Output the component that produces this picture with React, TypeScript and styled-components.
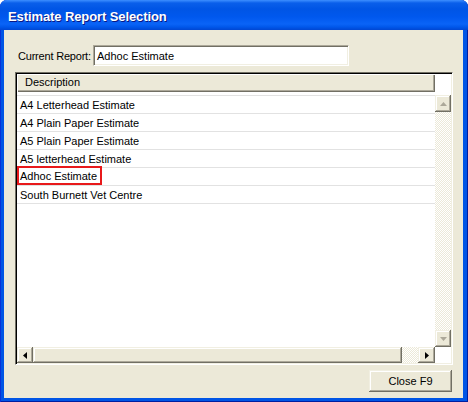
import React from 'react';
import styled, { createGlobalStyle } from 'styled-components';

const GlobalStyle = createGlobalStyle`
  html, body {
    margin: 0;
    padding: 0;
    background: #ffffff;
  }
  body {
    font-family: "Liberation Sans", Arial, sans-serif;
    font-size: 11px;
    color: #000;
  }
`;

const raised = `
  box-shadow:
    inset -1px -1px 0 #716f64,
    inset 1px 1px 0 #f1efe2,
    inset -2px -2px 0 #aca899,
    inset 2px 2px 0 #ffffff;
`;

const Window = styled.div`
  width: 468px;
  height: 402px;
  display: flex;
  flex-direction: column;
  background: #0055e5;
  border-radius: 7px 7px 0 0;
  overflow: hidden;
  box-shadow: inset 1px 0 0 #0831d9, inset -1px 0 0 #001ea0, inset 0 -1px 0 #001ea0;
`;

const TitleBar = styled.div`
  height: 30px;
  flex-shrink: 0;
  box-sizing: border-box;
  display: flex;
  align-items: center;
  padding: 2px 0 0 8px;
  background: linear-gradient(
    to bottom,
    #3d8fff 0,
    #0a5fea 3px,
    #0055e5 9px,
    #0058ee 17px,
    #0a64f7 24px,
    #0057ea 27px,
    #0046d2 30px
  );
  color: #ffffff;
  font-family: "Liberation Sans", Arial, sans-serif;
  font-weight: bold;
  font-size: 13px;
  letter-spacing: -0.1px;
  text-shadow: 1px 1px 0 #0a1883;
`;

const Body = styled.div`
  flex: 1;
  min-height: 0;
  margin: 0 5px 4px 4px;
  background: #ece9d8;
  display: flex;
  flex-direction: column;
  box-sizing: border-box;
  padding: 15px 10px 6px 11px;
`;

const ReportRow = styled.div`
  display: flex;
  align-items: center;
  height: 21px;
  padding-left: 3px;
`;

const Label = styled.span`
  width: 75px;
  flex-shrink: 0;
  white-space: nowrap;
  letter-spacing: -0.2px;
`;

const TextBox = styled.div`
  width: 256px;
  height: 21px;
  flex-shrink: 0;
  box-sizing: border-box;
  background: #ffffff;
  border-style: solid;
  border-width: 1px;
  border-color: #aca899 #ffffff #ffffff #aca899;
  box-shadow: inset 1px 1px 0 #716f64, inset -1px -1px 0 #f1efe2;
  padding-left: 3px;
  display: flex;
  align-items: center;
`;

const ListBox = styled.div`
  margin-top: 6px;
  height: 293px;
  box-sizing: border-box;
  border-style: solid;
  border-width: 1px;
  border-color: #716f64 #ffffff #ffffff #716f64;
  padding: 1px;
  box-shadow: inset 1px 1px 0 #000000, inset -1px -1px 0 #f1efe2;
  background: #ffffff;
`;

const ListGrid = styled.div`
  height: 100%;
  display: grid;
  grid-template-columns: 1fr 16px;
  grid-template-rows: 18px 3px 1fr 16px;
  background: #ffffff;
`;

const Header = styled.div`
  grid-column: 1;
  grid-row: 1;
  background: #ece9d8;
  padding-left: 8px;
  line-height: 16px;
  box-shadow: inset 1px 1px 0 #ffffff, inset -1px -1px 0 #716f64, inset -2px -2px 0 #aca899;
`;

const Rows = styled.div`
  grid-column: 1;
  grid-row: 3;
  overflow: hidden;
`;

const Row = styled.div<{ $last?: boolean }>`
  height: ${(p) => (p.$last ? 19 : 18)}px;
  box-sizing: border-box;
  border-top: 1px solid #e2e2e2;
  border-bottom: ${(p) => (p.$last ? '1px solid #e2e2e2' : 'none')};
  padding-left: 3px;
  display: flex;
  align-items: center;
  white-space: nowrap;
`;

const Highlight = styled.span`
  display: inline-flex;
  align-items: center;
  box-sizing: border-box;
  height: 19px;
  margin: -2px 0 0 -3px;
  padding: 0 3px 0 1px;
  border: 2px solid #e8191b;
`;

const VScroll = styled.div`
  grid-column: 2;
  grid-row: 3;
  display: flex;
  flex-direction: column;
`;

const HScroll = styled.div`
  grid-column: 1;
  grid-row: 4;
  display: flex;
`;

const ScrollButton = styled.div<{ $w?: number; $h?: number }>`
  width: ${(p) => p.$w ?? 16}px;
  height: ${(p) => p.$h ?? 16}px;
  flex-shrink: 0;
  background: #ece9d8;
  display: flex;
  align-items: center;
  justify-content: center;
  ${raised}
`;

const Track = styled.div<{ $size?: number }>`
  ${(p) => (p.$size ? `width: ${p.$size}px; flex-shrink: 0;` : 'flex: 1;')}
  background: repeating-conic-gradient(#ffffff 0 25%, #ece9d8 0 50%) 0 0 / 2px 2px;
`;

const Thumb = styled.div`
  flex: 1;
  background: #ece9d8;
  ${raised}
`;

const ButtonRow = styled.div`
  margin-top: 5px;
  display: flex;
  justify-content: flex-end;
  padding-right: 1px;
`;

const CloseButton = styled.button`
  width: 83px;
  height: 22px;
  border: none;
  padding: 0;
  background: #ece9d8;
  font-family: "Liberation Sans", Arial, sans-serif;
  font-size: 11px;
  color: #000;
  ${raised}
`;

const Arrow: React.FC<{ dir: 'up' | 'down' | 'left' | 'right'; disabled?: boolean }> = ({ dir, disabled }) => {
  const fill = disabled ? '#aca899' : '#000000';
  if (dir === 'up' || dir === 'down') {
    const pts = dir === 'up' ? '0,4 7,4 3.5,0' : '0,0 7,0 3.5,4';
    return (
      <svg width="7" height="4" viewBox="0 0 7 4">
        <polygon points={pts} fill={fill} />
      </svg>
    );
  }
  const pts = dir === 'right' ? '0,0 4,3.5 0,7' : '4,0 0,3.5 4,7';
  return (
    <svg width="4" height="7" viewBox="0 0 4 7">
      <polygon points={pts} fill={fill} />
    </svg>
  );
};

const reports = [
  'A4 Letterhead Estimate',
  'A4 Plain Paper Estimate',
  'A5 Plain Paper Estimate',
  'A5 letterhead Estimate',
  'Adhoc Estimate',
  'South Burnett Vet Centre',
];

const App: React.FC = () => {
  return (
    <>
      <GlobalStyle />
      <Window>
        <TitleBar>Estimate Report Selection</TitleBar>
        <Body>
          <ReportRow>
            <Label>Current Report:</Label>
            <TextBox>Adhoc Estimate</TextBox>
          </ReportRow>
          <ListBox>
            <ListGrid>
              <Header>Description</Header>
              <Rows>
                {reports.map((r, i) => (
                  <Row key={r} $last={i === reports.length - 1}>
                    {r === 'Adhoc Estimate' ? <Highlight>{r}</Highlight> : r}
                  </Row>
                ))}
              </Rows>
              <VScroll>
                <ScrollButton $h={17}>
                  <Arrow dir="up" disabled />
                </ScrollButton>
                <Track />
                <ScrollButton $h={17}>
                  <Arrow dir="down" disabled />
                </ScrollButton>
              </VScroll>
              <HScroll>
                <ScrollButton>
                  <Arrow dir="left" />
                </ScrollButton>
                <Thumb />
                <Track $size={16} />
                <ScrollButton $w={17}>
                  <Arrow dir="right" />
                </ScrollButton>
              </HScroll>
            </ListGrid>
          </ListBox>
          <ButtonRow>
            <CloseButton>Close F9</CloseButton>
          </ButtonRow>
        </Body>
      </Window>
    </>
  );
};

export default App;
